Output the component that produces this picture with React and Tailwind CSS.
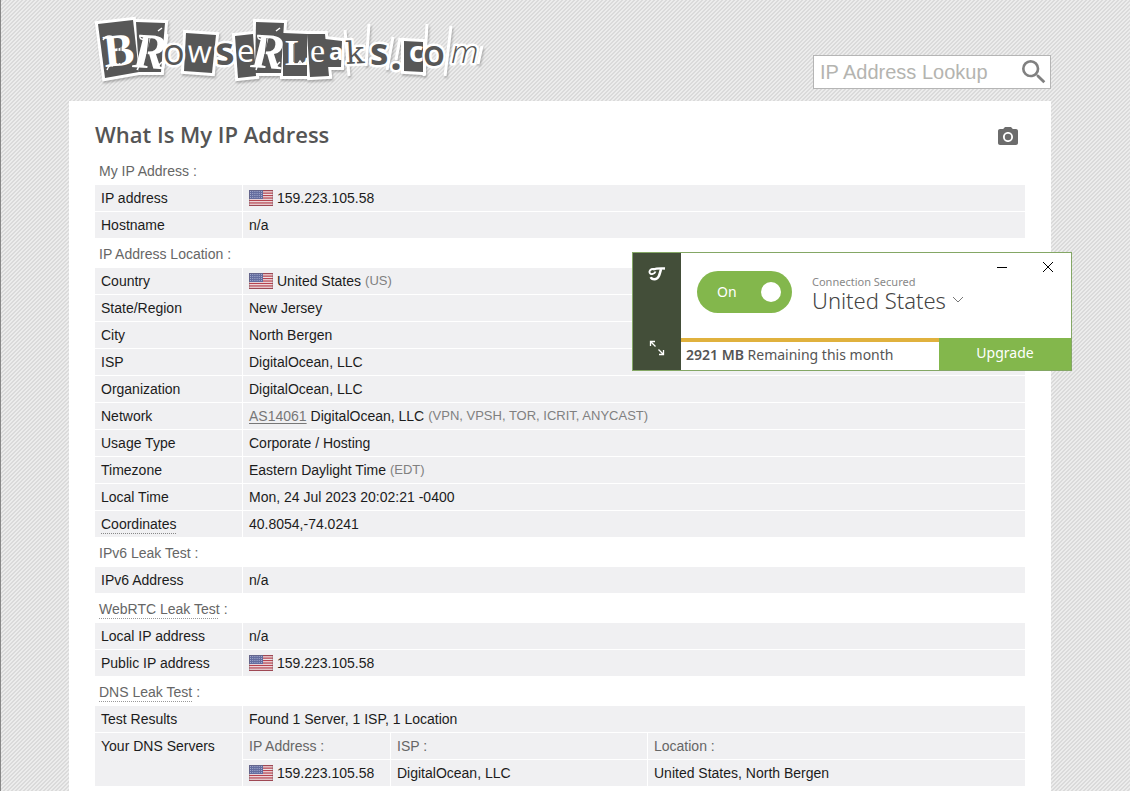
import React, { useState } from 'react';
import { MdCameraAlt, MdSearch } from 'react-icons/md';

const ipInfo = [
  { label: 'IP address', value: '159.223.105.58', flag: true },
  { label: 'Hostname', value: 'n/a' },
];

const locationInfo = [
  { label: 'Country', value: 'United States', note: '(US)', flag: true },
  { label: 'State/Region', value: 'New Jersey' },
  { label: 'City', value: 'North Bergen' },
  { label: 'ISP', value: 'DigitalOcean, LLC' },
  { label: 'Organization', value: 'DigitalOcean, LLC' },
  { label: 'Network', link: 'AS14061', value: 'DigitalOcean, LLC', note: '(VPN, VPSH, TOR, ICRIT, ANYCAST)' },
  { label: 'Usage Type', value: 'Corporate / Hosting' },
  { label: 'Timezone', value: 'Eastern Daylight Time', note: '(EDT)' },
  { label: 'Local Time', value: 'Mon, 24 Jul 2023 20:02:21 -0400' },
  { label: 'Coordinates', value: '40.8054,-74.0241', dotted: true },
];

const webrtcInfo = [
  { label: 'Local IP address', value: 'n/a' },
  { label: 'Public IP address', value: '159.223.105.58', flag: true },
];

const CELL = 'h-[27px] border-b border-white bg-[#f0f0f2] px-1.5 py-0 text-left align-middle font-normal';

function Flag() {
  return (
    <svg viewBox="0 0 24 16" className="mr-1 h-4 w-6 shrink-0" aria-label="US flag">
      <rect width="24" height="16" fill="#f4eef0" />
      {[0, 1, 2, 3, 4, 5, 6].map((i) => (
        <rect key={i} y={i * 2.46} width="24" height="1.3" fill="#b5434f" />
      ))}
      <rect width="14" height="9" fill="#646d9f" />
      {[1, 3, 5, 7].map((y) => (
        <path key={y} d={`M1 ${y + 0.5}H13.5`} stroke="#b4bad8" strokeWidth="0.8" strokeDasharray="1 1.2" />
      ))}
      <rect x="0.5" y="0.5" width="23" height="15" fill="none" stroke="#6b5560" strokeOpacity="0.3" />
    </svg>
  );
}

function SectionTitle({ children, dotted }) {
  return (
    <h2 className="flex h-[29px] items-center pl-1 text-[#666]">
      {dotted ? (
        <a href="#test" className="underline decoration-[#999] decoration-dotted decoration-1 underline-offset-4">{children}</a>
      ) : (
        <span>{children}</span>
      )}
      <span className="ml-1">:</span>
    </h2>
  );
}

function InfoTable({ rows }) {
  return (
    <table className="w-full table-fixed border-separate border-spacing-0">
      <tbody>
        {rows.map((row) => (
          <tr key={row.label}>
            <th scope="row" className={`${CELL} w-[148px] border-r`}>
              {row.dotted ? (
                <span className="underline decoration-[#888] decoration-dotted decoration-1 underline-offset-4">{row.label}</span>
              ) : (
                row.label
              )}
            </th>
            <td className={CELL}>
              <div className="flex items-center">
                {row.flag && <Flag />}
                {row.link && <a href="#asn" className="mr-1 text-[#777] underline underline-offset-2">{row.link}</a>}
                <span>{row.value}</span>
                {row.note && <span className="ml-1 text-[13px] text-[#808080]">{row.note}</span>}
              </div>
            </td>
          </tr>
        ))}
      </tbody>
    </table>
  );
}

function DnsTable() {
  return (
    <table className="w-full table-fixed border-separate border-spacing-0">
      <colgroup>
        <col className="w-[148px]" />
        <col className="w-[148px]" />
        <col className="w-[257px]" />
        <col />
      </colgroup>
      <tbody>
        <tr>
          <th scope="row" className={`${CELL} border-r`}>Test Results</th>
          <td colSpan={3} className={CELL}>Found 1 Server, 1 ISP, 1 Location</td>
        </tr>
        <tr>
          <th scope="row" rowSpan={2} className="border-r border-b border-white bg-[#f0f0f2] px-1.5 pt-[3px] text-left align-top font-normal">
            Your DNS Servers
          </th>
          <th scope="col" className={`${CELL} border-r text-[#666]`}>IP Address :</th>
          <th scope="col" className={`${CELL} border-r text-[#666]`}>ISP :</th>
          <th scope="col" className={`${CELL} text-[#666]`}>Location :</th>
        </tr>
        <tr>
          <td className={`${CELL} border-r`}>
            <div className="flex items-center"><Flag />159.223.105.58</div>
          </td>
          <td className={`${CELL} border-r`}>DigitalOcean, LLC</td>
          <td className={CELL}>United States, North Bergen</td>
        </tr>
      </tbody>
    </table>
  );
}

// Paper cut-outs of the ransom-note logo
const TILES = [
  '8,14 43,10 49,62 15,68',
  '46,12 75,13 71,62 49,62',
  '96,23 126,25 122,63 94,61',
  '145,26 163,24 166,66 148,68',
  '166,12 194,13 191,63 165,63',
  '193,23 217,24 217,66 193,66',
  '217,24 235,24 239,66 220,67',
  '235,29 252,31 251,57 235,57',
  '314,31 333,32 333,62 314,61',
];

// Thin paper edges left between the loose letters
const EDGES = [
  'M77 24L73 58',
  'M255 20L259 66',
  'M279 14L276 56',
  'M303 27L297 60M310 28L306 50',
  'M337 14L334 66',
  'M361 16L355 66',
  'M392 36L388 54',
];

const LETTERS = [
  { t: 'B', x: 15, y: 57, size: 46, font: 'Liberation Serif', weight: 700, fill: '#fff', rot: -6 },
  { t: 'R', x: 42, y: 57, size: 50, font: 'Liberation Serif', weight: 700, fill: '#fff', rot: 4, italic: true },
  { t: 'o', x: 73, y: 55, size: 36, font: 'Open Sans', weight: 400, fill: '#575757' },
  { t: 'w', x: 97, y: 52, size: 31, font: 'Open Sans', weight: 400, fill: '#fff', rot: 3 },
  { t: 's', x: 126, y: 55, size: 38, font: 'Open Sans', weight: 700, fill: '#575757', rot: -3 },
  { t: 'e', x: 147, y: 52, size: 31, font: 'Open Sans', weight: 400, fill: '#fff' },
  { t: 'R', x: 160, y: 57, size: 50, font: 'Liberation Serif', weight: 700, fill: '#fff', rot: 4, italic: true },
  { t: 'L', x: 195, y: 55, size: 36, font: 'Liberation Serif', weight: 700, fill: '#fff' },
  { t: 'e', x: 220, y: 52, size: 34, font: 'Liberation Serif', weight: 400, fill: '#fff' },
  { t: 'a', x: 239, y: 50, size: 24, font: 'Open Sans', weight: 700, fill: '#fff' },
  { t: 'k', x: 256, y: 54, size: 31, font: 'DejaVu Serif', weight: 400, fill: '#575757', rot: -3 },
  { t: 's', x: 280, y: 55, size: 37, font: 'Open Sans', weight: 700, fill: '#575757' },
  { t: '.', x: 300, y: 60, size: 42, font: 'Open Sans', weight: 700, fill: '#575757' },
  { t: 'c', x: 319, y: 52, size: 28, font: 'Noto Sans', weight: 700, fill: '#fff' },
  { t: 'o', x: 333, y: 56, size: 36, font: 'Open Sans', weight: 600, fill: '#575757' },
  { t: 'm', x: 361, y: 53, size: 32, font: 'Open Sans', weight: 300, fill: '#575757', italic: true },
];

function Logo() {
  return (
    <svg viewBox="0 0 400 80" className="h-20 w-[400px]" role="img" aria-label="BrowserLeaks.com">
      <g className="drop-shadow-[1px_2px_1px_rgba(0,0,0,0.25)]">
        {TILES.map((p) => (
          <polygon key={p} points={p} fill="#fff" stroke="#fff" strokeWidth="6" />
        ))}
        {EDGES.map((d) => (
          <path key={d} d={d} stroke="#fff" strokeWidth="3" />
        ))}
      </g>
      {TILES.map((p) => (
        <polygon key={p} points={p} fill="#575757" />
      ))}
      {LETTERS.map((l, i) => (
        <text
          key={i}
          x={l.x}
          y={l.y}
          fontFamily={l.font}
          fontSize={l.size}
          fontWeight={l.weight}
          fontStyle={l.italic ? 'italic' : 'normal'}
          fill={l.fill}
          stroke={l.fill === '#fff' ? 'none' : '#fff'}
          strokeWidth="5"
          strokeLinejoin="round"
          paintOrder="stroke"
          transform={l.rot ? `rotate(${l.rot} ${l.x} ${l.y})` : undefined}
        >
          {l.t}
        </text>
      ))}
      {/* flourishes of the blackletter capitals */}
      <g fill="none" stroke="#fff" strokeWidth="1.5">
        <path d="M13 30q4-6 10-3M17 60q2-6 6-4" />
        <path d="M50 25q-1 5 4 4M68 21l4-3M50 54l-3 6M67 57l5-5" />
        <path d="M168 25q-1 5 4 4M186 21l4-3M168 54l-2 6M185 57l5-5" />
        <path d="M208 54l2-3 2 3 3-2" />
      </g>
      <g stroke="#575757" strokeWidth="1">
        <path d="M28 30v24M31 30v24M59 28l-3 26M177 28l-3 26M204 34v18" />
      </g>
    </svg>
  );
}

function VpnWindow() {
  const [on, setOn] = useState(true);

  return (
    <aside className="absolute top-[252px] left-[631px] flex h-[119px] w-[440px] border border-[#84a765] bg-white font-['Noto_Sans',sans-serif] text-[#555]">
      <div className="flex w-12 shrink-0 flex-col items-center justify-between bg-[#434e39] pt-3.5 pb-3.5">
        <svg viewBox="0 0 18 14" className="h-3.5 w-[18px]" fill="none" stroke="#fff">
          <path d="M5 2.500Q9 1 17 1.500" strokeWidth="2.4" />
          <path d="M6 2C2.500 1.500 .8 4 1.800 6 3 8 6.500 7 7.500 4.500" strokeWidth="1.9" />
          <path d="M13 2C11.500 8 10.500 12.300 6.500 12.300 4.500 12.300 3.200 11.500 2.800 10.200" strokeWidth="2.5" />
        </svg>
        <button type="button" aria-label="Expand">
          <svg viewBox="0 0 16 16" className="size-4" fill="none" stroke="#fff" strokeWidth="1.3">
            <path d="M1.500 6V1.500H6M1.500 1.500L6.500 6.500M14.500 10v4.500H10M14.500 14.500L9.500 9.500" />
          </svg>
        </button>
      </div>
      <div className="flex min-w-0 flex-1 flex-col">
        <div className="flex flex-1 pl-4">
          <button
            type="button"
            role="switch"
            aria-checked={on}
            onClick={() => setOn(!on)}
            className="mt-[18px] flex h-[42px] w-[95px] items-center justify-between rounded-full bg-[#83b74c] pr-[11px] pl-5 text-sm text-white"
          >
            {on ? 'On' : 'Off'}
            <span className="size-5 rounded-full bg-white" />
          </button>
          <div className="mt-[21px] ml-5 flex-1">
            <p className="text-[11px] leading-4 text-[#888]">Connection Secured</p>
            <button type="button" className="flex items-center gap-1.5 text-[22px] leading-5 font-light whitespace-nowrap text-[#444]">
              United States
              <svg viewBox="0 0 12 8" className="h-2 w-3" fill="none" stroke="#777">
                <path d="M1 1l5 5 5-5" />
              </svg>
            </button>
          </div>
          <div className="flex items-start gap-[34px] pt-2 pr-[17px] text-black">
            <button type="button" aria-label="Minimize">
              <svg viewBox="0 0 12 12" className="size-3" stroke="currentColor"><path d="M1 6.500h10" /></svg>
            </button>
            <button type="button" aria-label="Close">
              <svg viewBox="0 0 12 12" className="size-3" stroke="currentColor"><path d="M1 1l10 10M11 1L1 11" /></svg>
            </button>
          </div>
        </div>
        <div className="flex h-8">
          <p className="flex-1 border-t-4 border-[#e0b13d] pl-[5px] text-sm leading-[26px] whitespace-nowrap">
            <span className="font-semibold">2921 MB</span> Remaining this month
          </p>
          <button type="button" className="w-[132px] bg-[#83b74c] pb-0.5 text-sm text-white">Upgrade</button>
        </div>
      </div>
    </aside>
  );
}

export default function App() {
  return (
    <div className="relative flex min-h-screen flex-col border-l border-[#888] bg-[#e6e6e6] bg-[linear-gradient(135deg,#dadada_25%,#ececec_25%,#ececec_50%,#dadada_50%,#dadada_75%,#ececec_75%)] bg-[length:4px_4px] pr-[79px] pl-[68px] font-['Liberation_Sans',Arial,sans-serif] text-sm text-[#1c1c1c]">
      <header className="flex h-[101px] items-start justify-between pt-2.5 pl-[21px]">
        <Logo />
        <form className="mt-[45px] flex h-[34px] w-[238px] items-center border border-[#b5b5b5] bg-white" onSubmit={(e) => e.preventDefault()}>
          <input
            type="text"
            aria-label="IP Address Lookup"
            placeholder="IP Address Lookup"
            className="min-w-0 flex-1 pl-1.5 text-xl placeholder-[#b4b4b0] outline-none"
          />
          <button type="submit" aria-label="Search" className="text-[#808080]">
            <MdSearch className="size-8" />
          </button>
        </form>
      </header>

      <main className="flex-1 bg-white px-[26px] pb-1">
        <div className="flex h-[55px] items-start justify-between pt-[17px] pr-[5px]">
          <h1 className="font-['Open_Sans',sans-serif] text-[22px] leading-8 font-semibold text-[#555]">What Is My IP Address</h1>
          <button type="button" aria-label="Take screenshot" className="mt-[7px] text-[#6c6c6c]">
            <MdCameraAlt className="size-6" />
          </button>
        </div>

        <SectionTitle>My IP Address</SectionTitle>
        <InfoTable rows={ipInfo} />

        <SectionTitle>IP Address Location</SectionTitle>
        <InfoTable rows={locationInfo} />

        <SectionTitle>IPv6 Leak Test</SectionTitle>
        <InfoTable rows={[{ label: 'IPv6 Address', value: 'n/a' }]} />

        <SectionTitle dotted>WebRTC Leak Test</SectionTitle>
        <InfoTable rows={webrtcInfo} />

        <SectionTitle dotted>DNS Leak Test</SectionTitle>
        <DnsTable />
      </main>

      <VpnWindow />
    </div>
  );
}
